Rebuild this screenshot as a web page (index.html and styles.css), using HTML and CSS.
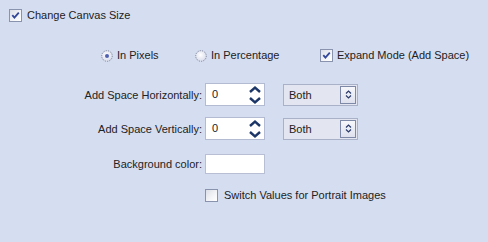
FILE: index.html
```html
<!DOCTYPE html>
<html>
<head>
<meta charset="utf-8">
<link rel="stylesheet" href="styles.css">
</head>
<body>
<div class="panel">
  <div class="row-top">
    <span class="cb checked"><svg viewBox="0 0 11 11" width="11" height="11"><path d="M2.3 5.2 L4.4 7.6 L8.8 2.6" fill="none" stroke="#33479a" stroke-width="1.8"/></svg></span>
    <span class="lbl">Change Canvas Size</span>
  </div>

  <div class="row-mode">
    <div class="opt opt-pixels">
      <svg class="radio" viewBox="0 0 12 12" width="12" height="12"><defs><radialGradient id="rg1" cx="0.45" cy="0.4" r="0.6"><stop offset="0" stop-color="#ffffff"/><stop offset="1" stop-color="#d9dcec"/></radialGradient></defs><circle cx="6" cy="6" r="5.3" fill="url(#rg1)" stroke="#7d8498" stroke-width="1" stroke-dasharray="1.2 1.1"/><circle cx="6" cy="6" r="2" fill="#5060b0"/></svg>
      <span class="lbl">In Pixels</span>
    </div>
    <div class="opt opt-perc">
      <svg class="radio" viewBox="0 0 12 12" width="12" height="12"><defs><radialGradient id="rg2" cx="0.45" cy="0.4" r="0.6"><stop offset="0" stop-color="#ffffff"/><stop offset="1" stop-color="#d9dcec"/></radialGradient></defs><circle cx="6" cy="6" r="5.3" fill="url(#rg2)" stroke="#7d8498" stroke-width="1" stroke-dasharray="1.2 1.1"/></svg>
      <span class="lbl">In Percentage</span>
    </div>
    <div class="opt">
      <span class="cb checked"><svg viewBox="0 0 11 11" width="11" height="11"><path d="M2.3 5.2 L4.4 7.6 L8.8 2.6" fill="none" stroke="#33479a" stroke-width="1.8"/></svg></span>
      <span class="lbl">Expand Mode (Add Space)</span>
    </div>
  </div>

  <div class="form-row row-h">
    <span class="flabel">Add Space Horizontally:</span>
    <div class="spin">
      <span class="val">0</span>
      <svg class="arrows" viewBox="0 0 14 22" width="14" height="22"><path d="M2 8 L7 3.5 L12 8" fill="none" stroke="#1c3668" stroke-width="2.4"/><path d="M2 14 L7 18.5 L12 14" fill="none" stroke="#1c3668" stroke-width="2.4"/></svg>
    </div>
    <div class="select">
      <span class="val">Both</span>
      <span class="sbtn"><svg viewBox="0 0 7 9" width="7" height="9"><path d="M1 3.5 L3.5 1 L6 3.5 M1 5.5 L3.5 8 L6 5.5" fill="none" stroke="#2a3a6a" stroke-width="1.2"/></svg></span>
    </div>
  </div>

  <div class="form-row row-v">
    <span class="flabel">Add Space Vertically:</span>
    <div class="spin">
      <span class="val">0</span>
      <svg class="arrows" viewBox="0 0 14 22" width="14" height="22"><path d="M2 8 L7 3.5 L12 8" fill="none" stroke="#1c3668" stroke-width="2.4"/><path d="M2 14 L7 18.5 L12 14" fill="none" stroke="#1c3668" stroke-width="2.4"/></svg>
    </div>
    <div class="select">
      <span class="val">Both</span>
      <span class="sbtn"><svg viewBox="0 0 7 9" width="7" height="9"><path d="M1 3.5 L3.5 1 L6 3.5 M1 5.5 L3.5 8 L6 5.5" fill="none" stroke="#2a3a6a" stroke-width="1.2"/></svg></span>
    </div>
  </div>

  <div class="form-row row-bg">
    <span class="flabel">Background color:</span>
    <div class="colorbox"></div>
  </div>

  <div class="row-switch">
    <span class="cb"></span>
    <span class="lbl">Switch Values for Portrait Images</span>
  </div>
</div>
</body>
</html>
```
FILE: styles.css
```css
html, body {
  margin: 0;
  padding: 0;
}
body {
  background: #d5ddf1;
  width: 488px;
  height: 242px;
  overflow: hidden;
  font-family: "Liberation Sans", Arial, sans-serif;
  font-size: 11px;
  color: #222222;
}
.panel {
  padding: 9px 0 0 9px;
  display: flex;
  flex-direction: column;
}
.cb {
  box-sizing: border-box;
  width: 13px;
  height: 13px;
  border: 1px solid #8a93ad;
  background: linear-gradient(135deg, #dcdfe8 0%, #f4f5f8 60%, #ffffff 100%);
  display: inline-flex;
  align-items: center;
  justify-content: center;
  flex: none;
}
.cb svg { display: block; }
.lbl {
  line-height: 13px;
  white-space: nowrap;
}
.row-top {
  display: flex;
  align-items: center;
  gap: 5px;
  height: 13px;
}
.row-mode {
  display: flex;
  align-items: center;
  margin-top: 27px;
  margin-left: 92px;
  height: 13px;
}
.opt {
  display: flex;
  align-items: center;
  gap: 4px;
}
.opt-pixels { width: 94px; }
.opt-perc { width: 125px; }
.radio { display: block; flex: none; }
.form-row {
  display: flex;
  align-items: center;
}
.flabel {
  width: 193px;
  text-align: right;
  padding-right: 3px;
  white-space: nowrap;
  flex: none;
}
.row-h { margin-top: 21px; height: 23px; }
.row-v { margin-top: 11px; height: 23px; }
.row-bg { margin-top: 14px; height: 20px; }
.spin {
  box-sizing: border-box;
  width: 60px;
  height: 23px;
  background: #ffffff;
  border: 1px solid #b3bbd3;
  display: flex;
  align-items: center;
  justify-content: space-between;
  padding: 0 2px 0 6px;
}
.spin .val { line-height: 13px; }
.arrows { display: block; }
.select {
  box-sizing: border-box;
  width: 75px;
  height: 22px;
  margin-left: 18px;
  border: 1px solid #a9b1c8;
  background: #e3e5f0;
  display: flex;
  align-items: center;
  justify-content: space-between;
  padding: 0 1px 0 5px;
}
.sbtn {
  box-sizing: border-box;
  width: 16px;
  height: 18px;
  border: 1px solid #7e89a8;
  background: linear-gradient(#f6f7fb, #dfe2ee);
  display: flex;
  align-items: center;
  justify-content: center;
}
.sbtn svg { display: block; }
.colorbox {
  box-sizing: border-box;
  width: 60px;
  height: 20px;
  background: #ffffff;
  border: 1px solid #b8bfd4;
}
.row-switch {
  display: flex;
  align-items: center;
  gap: 6px;
  margin-top: 15px;
  margin-left: 196px;
  height: 13px;
}
```
